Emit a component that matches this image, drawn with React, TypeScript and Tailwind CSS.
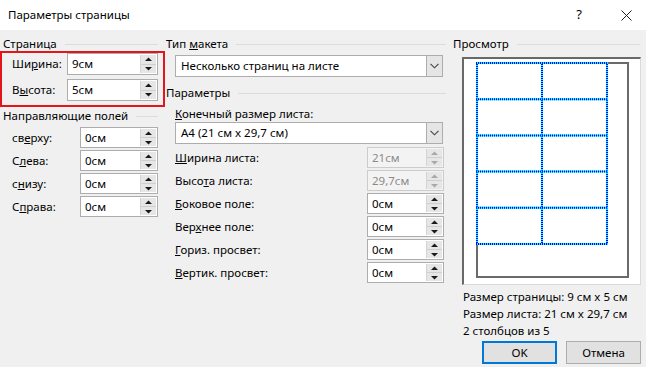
import React from "react";

function Header({ label, lineMr = 0 }: { label: React.ReactNode; lineMr?: number }) {
  return (
    <div className="flex h-[14px] items-center">
      <span className="whitespace-nowrap leading-[14px]">{label}</span>
      <div className="ml-[8px] h-px flex-1 bg-[#dcdcdc]" style={{ marginRight: lineMr }} />
    </div>
  );
}

function Arrows({ disabled }: { disabled?: boolean }) {
  const c = disabled ? "#a8a8a8" : "#1a1a1a";
  return (
    <div className="flex w-[16px] flex-col border-l border-[#d4d4d4] bg-[#e6e6e6]">
      <div className="flex flex-1 items-center justify-center border-b border-[#cfcfcf]">
        <svg width="7" height="5" viewBox="0 0 7 5">
          <polygon points="3.5,0.5 7,4 0,4" fill={c} />
        </svg>
      </div>
      <div className="flex flex-1 items-center justify-center">
        <svg width="7" height="5" viewBox="0 0 7 5">
          <polygon points="0,1 7,1 3.5,4.5" fill={c} />
        </svg>
      </div>
    </div>
  );
}

function Spin({ value, w, h = 21, disabled }: { value: string; w: number; h?: number; disabled?: boolean }) {
  return (
    <div
      className={
        disabled
          ? "flex border border-[#cccccc] bg-[#f3f3f3] p-[1px] text-[#8a8a8a]"
          : "flex border border-[#adadad] bg-white p-[1px] text-black"
      }
      style={{ width: w, height: h }}
    >
      <div className="flex flex-1 items-center pl-[3px] leading-none">{value}</div>
      <Arrows disabled={disabled} />
    </div>
  );
}

function Select({ value }: { value: string }) {
  return (
    <div className="flex h-[22px] w-[268px] border border-[#adadad] bg-white">
      <div className="flex flex-1 items-center pl-[5px]">{value}</div>
      <div className="flex w-[16px] items-center justify-center border-l border-[#adadad] bg-[#e5e5e5]">
        <svg width="9" height="6" viewBox="0 0 9 6">
          <polyline points="0.5,0.8 4.5,4.8 8.5,0.8" fill="none" stroke="#444" strokeWidth="1.1" />
        </svg>
      </div>
    </div>
  );
}

function Grid() {
  const xs = [1, 66, 131];
  const ys = [1, 37.2, 73.4, 109.6, 145.8, 182];
  return (
    <svg width="150" height="214" className="absolute left-0 top-0">
      {xs.map((x) => (
        <g key={"x" + x}>
          <line x1={x} y1={0} x2={x} y2={183} stroke="#00ffff" strokeWidth="2" />
          <line x1={x} y1={0} x2={x} y2={183} stroke="#0000ff" strokeWidth="2" strokeDasharray="1 1" />
        </g>
      ))}
      {ys.map((y) => (
        <g key={"y" + y}>
          <line x1={0} y1={y} x2={132} y2={y} stroke="#00ffff" strokeWidth="2" />
          <line x1={0} y1={y} x2={132} y2={y} stroke="#0000ff" strokeWidth="2" strokeDasharray="1 1" />
        </g>
      ))}
    </svg>
  );
}

export default function App() {
  const rowsMid: [React.ReactNode, string, boolean][] = [
    [<><u>Ш</u>ирина листа:</>, "21см", true],
    [<>Высо<u>т</u>а листа:</>, "29,7см", true],
    [<><u>Б</u>оковое поле:</>, "0см", false],
    [<>Вер<u>х</u>нее поле:</>, "0см", false],
    [<><u>Г</u>ориз. просвет:</>, "0см", false],
    [<><u>В</u>ертик. просвет:</>, "0см", false],
  ];
  const rowsLeft: [React.ReactNode, string][] = [
    [<>св<u>е</u>рху:</>, "0см"],
    [<>С<u>л</u>ева:</>, "0см"],
    [<>с<u>н</u>изу:</>, "0см"],
    [<>С<u>п</u>рава:</>, "0см"],
  ];
  return (
    <div className="h-[367px] w-[646px] overflow-hidden bg-[#f0f0f0] [font-family:'Noto_Sans',sans-serif] text-[11.5px] text-black">
      {/* title bar */}
      <div className="flex h-[30px] items-center bg-white">
        <span className="ml-[8px] text-[11.5px]">Параметры страницы</span>
        <span className="ml-auto mr-[39px] text-[13px]">?</span>
        <svg width="11" height="11" viewBox="0 0 11 11" className="mr-[14px]">
          <path d="M0.5 0.5 L10.5 10.5 M10.5 0.5 L0.5 10.5" stroke="#222" strokeWidth="1" />
        </svg>
      </div>

      <div className="flex">
        {/* left column */}
        <div className="flex w-[166px] flex-col">
          <div className="mt-[7px] pl-[3px]">
            <Header label="Страница" lineMr={8} />
          </div>
          <div className="flex h-[56px] w-[165px] flex-col gap-[4px] border-2 border-[#e3141c] pl-[10px]">
            <div className="flex h-[22px] items-center">
              <span className="w-[55px]">
                Ши<u>р</u>ина:
              </span>
              <Spin value="9см" w={91} h={22} />
            </div>
            <div className="flex h-[22px] items-center">
              <span className="w-[55px]">
                В<u>ы</u>сота:
              </span>
              <Spin value="5см" w={91} h={22} />
            </div>
          </div>
          <div className="mt-[2px] pl-[3px]">
            <Header label="Направляющие полей" lineMr={8} />
          </div>
          <div className="mt-[4px] flex flex-col gap-[2px] pl-[12px]">
            {rowsLeft.map(([l, v], i) => (
              <div key={i} className="flex h-[21px] items-center">
                <span className="w-[68px]">{l}</span>
                <Spin value={v} w={78} />
              </div>
            ))}
          </div>
        </div>

        {/* middle column */}
        <div className="flex w-[280px] flex-col">
          <div className="mt-[7px]">
            <Header label={<>Тип <u>м</u>акета</>} />
          </div>
          <div className="ml-[9px] mt-[4px]">
            <Select value="Несколько страниц на листе" />
          </div>
          <div className="mt-[9px]">
            <Header label="Параметры" />
          </div>
          <div className="ml-[9px] mt-[7px] h-[14px] leading-[14px]">
            <u>К</u>онечный размер листа:
          </div>
          <div className="ml-[9px] mt-[1px]">
            <Select value="A4 (21 см x 29,7 см)" />
          </div>
          <div className="ml-[9px] mt-[3px] flex flex-col gap-[2px]">
            {rowsMid.map(([l, v, d], i) => (
              <div key={i} className="flex h-[21px] items-center">
                <span className="w-[192px]">{l}</span>
                <Spin value={v} w={77} disabled={d} />
              </div>
            ))}
          </div>
        </div>

        {/* right column */}
        <div className="ml-[7px] flex w-[188px] flex-col">
          <div className="mt-[7px]">
            <Header label="Просмотр" lineMr={1} />
          </div>
          <div className="ml-[9px] mt-[6px] h-[228px] w-[179px] border-l-2 border-t-2 border-[#696969] bg-white pl-[12px] pt-[3px] border-r border-b border-r-[#dadada] border-b-[#dadada]">
            <div className="relative h-[216px] w-[153px] border-2 border-[#6a6a6a]">
              <div className="absolute -left-[2px] -top-[2px]">
                <Grid />
              </div>
            </div>
          </div>
          <div className="ml-[10px] mt-[3px] leading-[17px]">
            <div>Размер страницы: 9 см x 5 см</div>
            <div>Размер листа: 21 см x 29,7 см</div>
            <div>2 столбцов из 5</div>
          </div>
          <div className="mt-[2px] flex gap-[9px] pl-[29px]">
            <div className="flex h-[23px] w-[75px] items-center justify-center border-2 border-[#0078d7] bg-[#e1e1e1]">
              OK
            </div>
            <div className="flex h-[23px] w-[75px] items-center justify-center border border-[#adadad] bg-[#e1e1e1]">
              Отмена
            </div>
          </div>
        </div>
      </div>
    </div>
  );
}
